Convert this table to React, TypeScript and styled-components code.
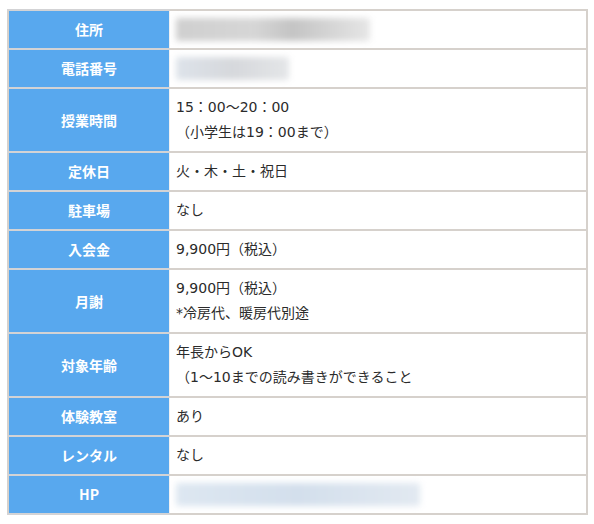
import React from "react";
import styled, { createGlobalStyle } from "styled-components";

const Global = createGlobalStyle`
  html, body { margin: 0; padding: 0; background: #ffffff; }
  body {
    padding: 9px 6px 0 7px;
    font-family: "Noto Sans CJK JP", "Noto Sans", sans-serif;
    color: #333333;
  }
`;

const Table = styled.table`
  width: 581px;
  border-collapse: collapse;
  border: 2px solid #d6d1cc;
  table-layout: fixed;
`;

const Row = styled.tr``;

const Head = styled.th`
  width: 152px;
  background: #58a8ee;
  color: #ffffff;
  font-weight: 700;
  font-size: 14px;
  line-height: 25px;
  text-align: center;
  padding: 6px 4px;
  border-top: 2px solid #d3d3d5;
  border-bottom: 2px solid #d3d3d5;
  border-right: 1px solid #eef0f2;
`;

const Cell = styled.td`
  background: #ffffff;
  font-family: "DejaVu Sans", "Noto Sans CJK JP", sans-serif;
  font-size: 14px;
  line-height: 25px;
  text-align: left;
  padding: 6px 8px 6px 6px;
  border-top: 2px solid #d6d1cc;
  border-bottom: 2px solid #d6d1cc;
  color: #2b2b2b;
  white-space: nowrap;
`;

const Blur = styled.span<{ $w: number; $c: string }>`
  display: block;
  width: ${(p) => p.$w}px;
  height: 23px;
  margin: 1px 0;
  background: ${(p) => p.$c};
  filter: blur(3px);
  border-radius: 2px;
`;

type Item = { label: string; lines?: string[]; blur?: { w: number; c: string } };

const rows: Item[] = [
  { label: "住所", blur: { w: 194, c: "linear-gradient(90deg,#cfcfcf,#d6d6d6 40%,#c4c4c4 60%,#e6e6e6)" } },
  { label: "電話番号", blur: { w: 113, c: "linear-gradient(90deg,#dde3ea,#d6d8dc 50%,#e4e6e8)" } },
  { label: "授業時間", lines: ["15：00～20：00", "（小学生は19：00まで）"] },
  { label: "定休日", lines: ["火・木・土・祝日"] },
  { label: "駐車場", lines: ["なし"] },
  { label: "入会金", lines: ["9,900円（税込）"] },
  { label: "月謝", lines: ["9,900円（税込）", "*冷房代、暖房代別途"] },
  { label: "対象年齢", lines: ["年長からOK", "（1～10までの読み書きができること"] },
  { label: "体験教室", lines: ["あり"] },
  { label: "レンタル", lines: ["なし"] },
  { label: "HP", blur: { w: 244, c: "linear-gradient(90deg,#dde7f1,#d3dfec 50%,#e2e9f1)" } },
];

export default function App() {
  return (
    <>
      <Global />
      <Table>
        <tbody>
          {rows.map((r) => (
            <Row key={r.label}>
              <Head>{r.label}</Head>
              <Cell>
                {r.blur ? (
                  <Blur $w={r.blur.w} $c={r.blur.c} />
                ) : (
                  r.lines!.map((l, i) => (
                    <React.Fragment key={i}>
                      {i > 0 && <br />}
                      {l}
                    </React.Fragment>
                  ))
                )}
              </Cell>
            </Row>
          ))}
        </tbody>
      </Table>
    </>
  );
}
